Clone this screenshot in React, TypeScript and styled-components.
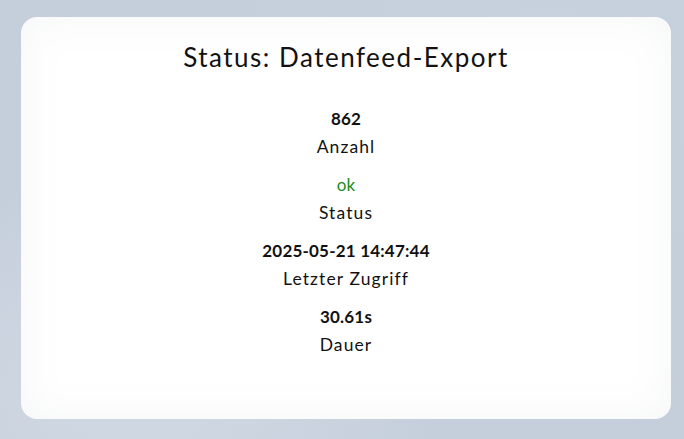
import React from "react";
import styled, { createGlobalStyle } from "styled-components";

const Global = createGlobalStyle`
  html, body { margin: 0; padding: 0; }
  body {
    width: 684px;
    height: 439px;
    overflow: hidden;
    font-family: "Lato", "Noto Sans", sans-serif;
    background:
      radial-gradient(ellipse at 20% 90%, rgba(210,218,228,0.9), rgba(210,218,228,0) 40%),
      radial-gradient(ellipse at 80% 10%, rgba(200,210,222,0.8), rgba(200,210,222,0) 50%),
      #c5cfdb;
  }
`;

const Page = styled.div`
  box-sizing: border-box;
  width: 684px;
  height: 439px;
  padding: 17px 13px 20px 21px;
  display: flex;
`;

const Card = styled.section`
  flex: 1;
  border-radius: 16px;
  background: #ffffff;
  box-shadow: inset 0 0 44px rgba(120, 130, 145, 0.07);
  display: flex;
  flex-direction: column;
  align-items: center;
  padding-top: 24px;
  color: #121212;
`;

const Title = styled.h1`
  margin: 0 0 32px;
  font-size: 26px;
  font-weight: 400;
  line-height: 32px;
  letter-spacing: 1.5px;
`;

const Stat = styled.div`
  display: flex;
  flex-direction: column;
  align-items: center;
  margin-bottom: 10px;
`;

const Value = styled.div<{ $tone?: string }>`
  font-size: 17px;
  line-height: 28px;
  letter-spacing: 0.2px;
  color: ${(p) => p.$tone ?? "#111111"};
  font-weight: ${(p) => (p.$tone ? 400 : 700)};
`;

const Label = styled.div`
  font-size: 17.5px;
  font-weight: 400;
  line-height: 28px;
  letter-spacing: 1.1px;
`;

const stats = [
  { value: "862", label: "Anzahl" },
  { value: "ok", label: "Status", tone: "#1b8c1b" },
  { value: "2025-05-21 14:47:44", label: "Letzter Zugriff" },
  { value: "30.61s", label: "Dauer" },
];

export default function App() {
  return (
    <>
      <Global />
      <Page>
        <Card>
          <Title>Status: Datenfeed-Export</Title>
          {stats.map((s) => (
            <Stat key={s.label}>
              <Value $tone={s.tone}>{s.value}</Value>
              <Label>{s.label}</Label>
            </Stat>
          ))}
        </Card>
      </Page>
    </>
  );
}
